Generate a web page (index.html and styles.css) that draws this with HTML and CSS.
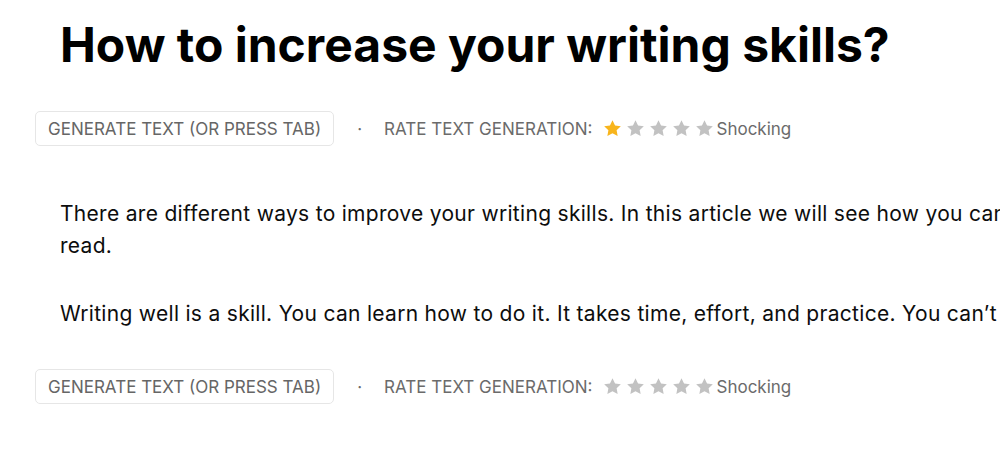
FILE: index.html
```html
<!DOCTYPE html>
<html lang="en">

<head>
    <meta charset="utf-8">
    <meta name="viewport" content="width=device-width, initial-scale=1.0">
    <title>Writing skills</title>
    <link rel="stylesheet" href="styles.css">
</head>

<body>
    <main class="editor">
        <h1>How to increase your writing skills?</h1>

        <div class="toolbar">
            <button class="generate">Generate text (or press tab)</button>
            <span class="sep">·</span>
            <span class="rate-label">Rate text generation:</span>
            <span class="stars">
                <svg class="star on" viewBox="0 0 24 24"><path d="M12 1.5l3.2 6.6 7.3 1-5.3 5.1 1.3 7.2L12 18l-6.5 3.4 1.3-7.2L1.5 9.1l7.3-1z"/></svg>
                <svg class="star" viewBox="0 0 24 24"><path d="M12 1.5l3.2 6.6 7.3 1-5.3 5.1 1.3 7.2L12 18l-6.5 3.4 1.3-7.2L1.5 9.1l7.3-1z"/></svg>
                <svg class="star" viewBox="0 0 24 24"><path d="M12 1.5l3.2 6.6 7.3 1-5.3 5.1 1.3 7.2L12 18l-6.5 3.4 1.3-7.2L1.5 9.1l7.3-1z"/></svg>
                <svg class="star" viewBox="0 0 24 24"><path d="M12 1.5l3.2 6.6 7.3 1-5.3 5.1 1.3 7.2L12 18l-6.5 3.4 1.3-7.2L1.5 9.1l7.3-1z"/></svg>
                <svg class="star" viewBox="0 0 24 24"><path d="M12 1.5l3.2 6.6 7.3 1-5.3 5.1 1.3 7.2L12 18l-6.5 3.4 1.3-7.2L1.5 9.1l7.3-1z"/></svg>
            </span>
            <span class="rating">Shocking</span>
        </div>

        <div class="text">
            <p>There are different ways to improve your writing skills. In this article we will see how you can make texts easier to read.</p>
            <p>Writing well is a skill. You can learn how to do it. It takes time, effort, and practice. You can’t rush it.</p>
        </div>

        <div class="toolbar">
            <button class="generate">Generate text (or press tab)</button>
            <span class="sep">·</span>
            <span class="rate-label">Rate text generation:</span>
            <span class="stars">
                <svg class="star" viewBox="0 0 24 24"><path d="M12 1.5l3.2 6.6 7.3 1-5.3 5.1 1.3 7.2L12 18l-6.5 3.4 1.3-7.2L1.5 9.1l7.3-1z"/></svg>
                <svg class="star" viewBox="0 0 24 24"><path d="M12 1.5l3.2 6.6 7.3 1-5.3 5.1 1.3 7.2L12 18l-6.5 3.4 1.3-7.2L1.5 9.1l7.3-1z"/></svg>
                <svg class="star" viewBox="0 0 24 24"><path d="M12 1.5l3.2 6.6 7.3 1-5.3 5.1 1.3 7.2L12 18l-6.5 3.4 1.3-7.2L1.5 9.1l7.3-1z"/></svg>
                <svg class="star" viewBox="0 0 24 24"><path d="M12 1.5l3.2 6.6 7.3 1-5.3 5.1 1.3 7.2L12 18l-6.5 3.4 1.3-7.2L1.5 9.1l7.3-1z"/></svg>
                <svg class="star" viewBox="0 0 24 24"><path d="M12 1.5l3.2 6.6 7.3 1-5.3 5.1 1.3 7.2L12 18l-6.5 3.4 1.3-7.2L1.5 9.1l7.3-1z"/></svg>
            </span>
            <span class="rating">Shocking</span>
        </div>
    </main>
</body>

</html>
```

FILE: styles.css
```css
html,
body {
    overflow: hidden;
}

body {
    margin: 0;
    background-color: #ffffff;
    font-family: 'Inter', 'Helvetica', sans-serif;
    color: #111111;
}

.editor {
    width: 1300px;
    padding: 0 0 0 35px;
}

h1 {
    margin: 16px 0 0 25px;
    font-size: 48px;
    font-weight: 700;
    line-height: 58px;
    color: #000000;
}

.toolbar {
    display: flex;
    align-items: center;
    height: 35px;
    margin-top: 37px;
    font-size: 17px;
    color: #6b6b6b;
}

.generate {
    height: 35px;
    padding: 0 12px;
    border: 1px solid #e6e6e6;
    border-radius: 5px;
    background-color: #ffffff;
    font-family: inherit;
    font-size: 17px;
    text-transform: uppercase;
    color: #666666;
}

.sep {
    margin: 0 22px 0 23px;
}

.rate-label {
    text-transform: uppercase;
    margin-right: 10px;
}

.stars {
    display: flex;
    gap: 4px;
    margin-right: 3px;
}

.star {
    width: 19px;
    height: 19px;
    fill: #c2c2c2;
}

.star.on {
    fill: #f8b51c;
}

.text {
    margin: 52px 0 0 25px;
    width: 1180px;
    font-size: 21px;
    letter-spacing: 0.3px;
    line-height: 32px;
    color: #0d0d0d;
}

.text p {
    margin: 0 0 36px 0;
}

.text p:last-child {
    margin-bottom: 0;
}

.text + .toolbar {
    margin-top: 39px;
}
```
